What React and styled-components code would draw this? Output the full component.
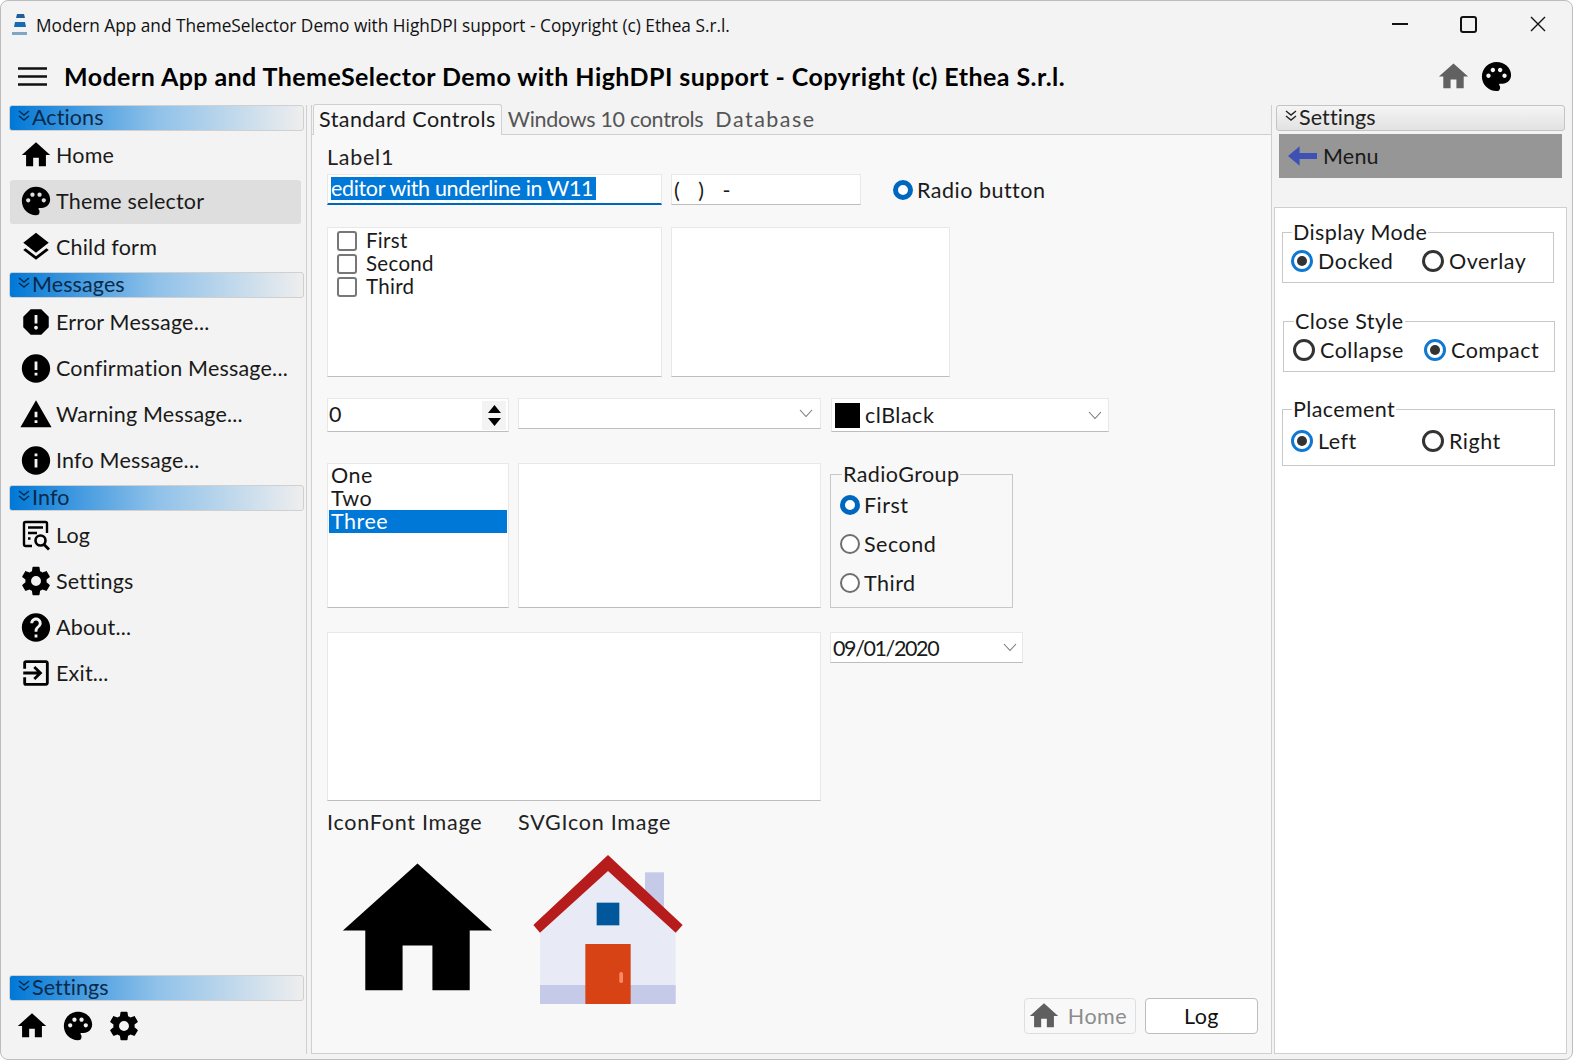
import React from 'react'
import styled, { createGlobalStyle } from 'styled-components'
import {
  MdHome,
  MdPalette,
  MdLayers,
  MdReport,
  MdError,
  MdWarning,
  MdInfo,
  MdHelp,
  MdExitToApp
} from 'react-icons/md'

const FONT = '"Lato", "Open Sans", sans-serif'

const GlobalStyle = createGlobalStyle`
  * { box-sizing: border-box; }
  html, body { margin: 0; padding: 0; background: #fff; }
  body { font-family: ${FONT}; color: #1a1a1a; }
`

const Window = styled.div`
  width: 1573px;
  height: 1060px;
  display: flex;
  flex-direction: column;
  background: #f3f3f3;
  border: 1px solid #bdbdbd;
  border-radius: 8px;
  overflow: hidden;
`
const TitleBar = styled.div`
  height: 50px;
  display: flex;
  align-items: center;
  padding: 0 0 2px 10px;
  flex-shrink: 0;
`
const WindowTitle = styled.span`
  font-family: "Open Sans", sans-serif;
  font-size: 17.25px;
  margin-left: 7px;
  color: #111;
  flex: 1;
`
const WinButton = styled.div`
  width: 69px;
  height: 46px;
  align-self: flex-start;
  display: flex;
  align-items: center;
  justify-content: center;
`
const ToolBar = styled.div`
  height: 54px;
  display: flex;
  align-items: center;
  padding: 0 58px 4px 17px;
  flex-shrink: 0;
`
const AppTitle = styled.h1`
  margin: -1px 0 0 17px;
  font-size: 25px;
  font-weight: 700;
  letter-spacing: 0.44px;
  color: #000;
  flex: 1;
  white-space: nowrap;
`
const ToolIcon = styled.span`
  display: flex;
  margin-left: ${p => p.$gap || 0}px;
  color: ${p => p.$color || '#000'};
`
const Main = styled.div`
  flex: 1;
  display: flex;
  min-height: 0;
  padding-bottom: 5px;
`
const LeftPanel = styled.div`
  width: 306px;
  flex-shrink: 0;
  display: flex;
  flex-direction: column;
  padding-left: 8px;
  padding-right: 1px;
  border-right: 1px solid #cfcfcf;
`
const Section = styled.div`
  display: flex;
  height: 26px;
  width: 295px;
  flex-shrink: 0;
  align-items: center;
  padding: 0 0 2px 7px;
  margin-top: ${p => p.$top || 0}px;
  border: 1px solid #d0d0d0;
  border-radius: 3px;
  background: linear-gradient(to right, #0078d7 0%, #8fc1e9 50%, #eeeeee 100%);
  font-size: 21.5px;
  letter-spacing: 0.1px;
  color: #0a2a4a;
`
const RightSection = styled(Section)`
  width: 289px;
  margin-left: 2px;
  background: linear-gradient(to bottom, #f5f5f5, #e2e2e2);
  color: #222;
  border-color: #c4c4c4;
`
const Chevrons = styled.svg`
  width: 14px;
  height: 13px;
  margin-right: 1px;
  margin-top: -3px;
  flex-shrink: 0;
`
const ItemList = styled.div`
  display: flex;
  flex-direction: column;
  padding-top: ${p => p.$top || 0}px;
  padding-bottom: ${p => p.$bottom || 0}px;
`
const Item = styled.div`
  height: 46px;
  display: flex;
  align-items: center;
  padding: 0 0 2px 9px;
  margin-left: 1px;
  width: 291px;
  border-radius: 3px;
  font-size: 21.5px;
  letter-spacing: 0.2px;
  background: ${p => (p.$active ? '#dedede' : 'transparent')};
  background-clip: padding-box;
  border-top: ${p => (p.$active ? '1px solid #f3f3f3' : 'none')};
  border-bottom: ${p => (p.$active ? '1px solid #f3f3f3' : 'none')};
`
const ItemIcon = styled.span`
  width: 34px;
  height: 34px;
  display: flex;
  align-items: center;
  justify-content: center;
  margin-right: 3px;
  flex-shrink: 0;
  color: #000;
`
const Filler = styled.div`
  flex: 1;
`
const BottomIcons = styled.div`
  display: flex;
  gap: 12px;
  padding: 8px 0 0 6px;
  height: 53px;
  color: #000;
`
const Center = styled.div`
  width: 961px;
  flex-shrink: 0;
  display: flex;
  flex-direction: column;
  margin-left: 4px;
  border-left: 1px solid #cfcfcf;
  border-right: 1px solid #cfcfcf;
`
const TabStrip = styled.div`
  height: 30px;
  display: flex;
  align-items: flex-end;
  padding-left: 1px;
  border-bottom: 1px solid #cfcfcf;
  flex-shrink: 0;
`
const Tab = styled.div`
  height: ${p => (p.$active ? 31 : 28)}px;
  margin-bottom: ${p => (p.$active ? -1 : 0)}px;
  padding: 0 ${p => (p.$active ? 5 : 6)}px 2px;
  display: flex;
  align-items: center;
  font-size: 21.5px;
  letter-spacing: ${p => p.$spacing}px;
  color: ${p => (p.$active ? '#1a1a1a' : '#555')};
  background: ${p => (p.$active ? '#f8f8f8' : 'transparent')};
  border: ${p => (p.$active ? '1px solid #cfcfcf' : 'none')};
  border-bottom: none;
  border-radius: 3px 3px 0 0;
`
const Page = styled.div`
  flex: 1;
  display: flex;
  flex-direction: column;
  background: #f8f8f8;
  padding: 10px 13px 19px 15px;
  border-bottom: 1px solid #cfcfcf;
  min-height: 0;
`
const Caption = styled.div`
  height: 24px;
  line-height: 24px;
  font-size: 21.5px;
  letter-spacing: 0.75px;
  width: ${p => (p.$w ? p.$w + 'px' : 'auto')};
  color: #222;
`
const Row = styled.div`
  display: flex;
  align-items: flex-start;
  margin-top: ${p => p.$top || 0}px;
  flex-shrink: 0;
`
const Box = styled.div`
  width: ${p => p.$w}px;
  height: ${p => p.$h}px;
  margin-left: ${p => p.$left || 0}px;
  background: #fff;
  border: 1px solid #e8e8e8;
  border-bottom: 1px solid #bdbdbd;
  display: flex;
  align-items: center;
  flex-shrink: 0;
  font-size: 21.5px;
  letter-spacing: 0.5px;
`
const EditBox = styled(Box)`
  border-bottom: 2px solid #0067c0;
  padding: 0 0 1px 3px;
`
const Selected = styled.span`
  background: #0078d7;
  color: #fff;
  height: 23px;
  line-height: 23px;
  padding-right: 3px;
  letter-spacing: -0.35px;
  white-space: nowrap;
`
const MaskText = styled.span`
  white-space: pre;
  padding-left: 2px;
`
const SpinText = styled.span`
  flex: 1;
  padding-left: 1px;
  padding-bottom: 3px;
`
const SpinButtons = styled.div`
  width: 24px;
  height: 29px;
  margin-right: 2px;
  background: #f3f3f3;
  display: flex;
  flex-direction: column;
  align-items: center;
  justify-content: center;
  gap: 5px;
`
const Arrow = styled.svg`
  width: 13px;
  height: 8px;
`
const ComboValue = styled.span`
  flex: 1;
  display: flex;
  align-items: center;
  padding-left: ${p => p.$left || 0}px;
  letter-spacing: ${p => p.$spacing ?? 0.5}px;
`
const ComboChevron = styled.svg`
  width: 14px;
  height: 9px;
  margin-right: ${p => p.$right || 7}px;
  flex-shrink: 0;
`
const Swatch = styled.span`
  width: 25px;
  height: 25px;
  background: #000;
  margin-right: 5px;
`
const CheckList = styled.div`
  display: flex;
  flex-direction: column;
  padding: 1px 0 0 9px;
  width: 100%;
  height: 100%;
`
const CheckRow = styled.div`
  height: 23px;
  display: flex;
  align-items: center;
  gap: 9px;
  font-size: 20.5px;
  letter-spacing: 0.3px;
`
const CheckText = styled.span`
  margin-top: -2px;
`
const CheckMark = styled.span`
  width: 20px;
  height: 20px;
  border: 2px solid #777;
  border-radius: 3px;
  background: #fff;
  flex-shrink: 0;
`
const ListColumn = styled.div`
  display: flex;
  flex-direction: column;
  width: 100%;
  height: 100%;
  padding: 0 1px;
`
const ListRow = styled.div`
  height: 23px;
  line-height: 23px;
  padding-left: 2px;
  background: ${p => (p.$selected ? '#0078d7' : 'transparent')};
  color: ${p => (p.$selected ? '#fff' : '#1a1a1a')};
`
const Radio = styled.span`
  width: ${p => p.$size}px;
  height: ${p => p.$size}px;
  border-radius: 50%;
  flex-shrink: 0;
  background: #fff;
  border: ${p => p.$ring}px solid ${p => p.$color};
  display: flex;
  align-items: center;
  justify-content: center;
`
const RadioDot = styled.span`
  width: 10px;
  height: 10px;
  border-radius: 50%;
  background: #333;
`
const RadioLabel = styled.label`
  display: flex;
  align-items: center;
  gap: ${p => p.$gap || 5}px;
  width: ${p => (p.$w ? p.$w + 'px' : 'auto')};
  height: ${p => (p.$h ? p.$h + 'px' : 'auto')};
  margin-left: ${p => p.$left || 0}px;
  margin-top: ${p => p.$top || 0}px;
  font-size: 21.5px;
  letter-spacing: 0.5px;
  flex-shrink: 0;
`
const GroupBox = styled.fieldset`
  margin: ${p => p.$top || 0}px 0 0 ${p => p.$left || 0}px;
  padding: 0;
  width: ${p => p.$w}px;
  height: ${p => p.$h}px;
  border: 1px solid #c8c8c8;
  flex-shrink: 0;
  min-width: 0;
`
const GroupLegend = styled.legend`
  margin-left: ${p => p.$left || 9}px;
  padding: 0 1px;
  font-size: 21.5px;
  letter-spacing: 0.4px;
  line-height: 24px;
  height: 24px;
`
const GroupColumn = styled.div`
  display: flex;
  flex-direction: column;
  margin-top: -1px;
  padding: 0 0 0 9px;
`
const GroupRow = styled.div`
  display: flex;
  padding: ${p => p.$pad || '4px 0 0 8px'};
`
const PictureRow = styled.div`
  flex: 1;
  display: flex;
  align-items: flex-start;
  margin-top: 7px;
  min-height: 0;
`
const BigHouse = styled(MdHome)`
  width: 179px;
  height: 179px;
  margin-left: 1px;
  flex-shrink: 0;
  color: #000;
`
const SvgHouse = styled.svg`
  width: 150px;
  height: 149px;
  margin: 14px 0 0 26px;
  flex-shrink: 0;
`
const Buttons = styled.div`
  display: flex;
  gap: 9px;
  margin-left: auto;
  align-self: flex-end;
`
const Button = styled.div`
  width: ${p => p.$w}px;
  height: 36px;
  display: flex;
  align-items: center;
  justify-content: center;
  gap: ${p => (p.$disabled ? 7 : 0)}px;
  padding-right: ${p => (p.$disabled ? 6 : 0)}px;
  font-size: 21.5px;
  letter-spacing: 0.5px;
  border-radius: 4px;
  background: ${p => (p.$disabled ? 'transparent' : '#fff')};
  color: ${p => (p.$disabled ? '#8c8c8c' : '#111')};
  border: 1px solid ${p => (p.$disabled ? '#dedede' : '#bdbdbd')};
`
const RightPanel = styled.div`
  flex: 1;
  min-width: 0;
  display: flex;
  flex-direction: column;
  margin-left: 2px;
  padding-right: 5px;
`
const MenuItem = styled.div`
  height: 44px;
  margin: 3px 3px 0 5px;
  width: 283px;
  background: #969696;
  display: flex;
  align-items: center;
  padding: 0 0 1px 9px;
  gap: 6px;
  font-size: 21.5px;
  letter-spacing: 0.2px;
`
const SettingsBody = styled.div`
  flex: 1;
  margin-top: 29px;
  background: #fff;
  border: 1px solid #cfcfcf;
  display: flex;
  flex-direction: column;
`

function SectionChevrons() {
  return (
    <Chevrons viewBox="0 0 14 13" fill="none" stroke="currentColor" strokeWidth="1.4">
      <path d="M2 2l5 4 5-4M2 7l5 4 5-4" />
    </Chevrons>
  )
}

function ChevronDown({ right }) {
  return (
    <ComboChevron $right={right} viewBox="0 0 14 9" fill="none" stroke="#777" strokeWidth="1.1">
      <path d="M1 1l6 6.5 6-6.5" />
    </ComboChevron>
  )
}

function GearIcon({ size = 34 }) {
  return (
    <svg width={size} height={size} viewBox="0 0 24 24" fill="currentColor">
      <path d="M12,15.5A3.5,3.5 0 0,1 8.5,12A3.5,3.5 0 0,1 12,8.5A3.5,3.5 0 0,1 15.5,12A3.5,3.5 0 0,1 12,15.5M19.43,12.97C19.47,12.65 19.5,12.33 19.5,12C19.5,11.67 19.47,11.34 19.43,11L21.54,9.37C21.73,9.22 21.78,8.95 21.66,8.73L19.66,5.27C19.54,5.05 19.27,4.96 19.05,5.05L16.56,6.05C16.04,5.66 15.5,5.32 14.87,5.07L14.5,2.42C14.46,2.18 14.25,2 14,2H10C9.75,2 9.54,2.18 9.5,2.42L9.13,5.07C8.5,5.32 7.96,5.66 7.44,6.05L4.95,5.05C4.73,4.96 4.46,5.05 4.34,5.27L2.34,8.73C2.21,8.95 2.27,9.22 2.46,9.37L4.57,11C4.53,11.34 4.5,11.67 4.5,12C4.5,12.33 4.53,12.65 4.57,12.97L2.46,14.63C2.27,14.78 2.21,15.05 2.34,15.27L4.34,18.73C4.46,18.95 4.73,19.03 4.95,18.95L7.44,17.94C7.96,18.34 8.5,18.68 9.13,18.93L9.5,21.58C9.54,21.82 9.75,22 10,22H14C14.25,22 14.46,21.82 14.5,21.58L14.87,18.93C15.5,18.67 16.04,18.34 16.56,17.94L19.05,18.95C19.27,19.03 19.54,18.95 19.66,18.73L21.66,15.27C21.78,15.05 21.73,14.78 21.54,14.63L19.43,12.97Z" />
    </svg>
  )
}

function LogIcon() {
  return (
    <svg width="34" height="34" viewBox="0 0 34 34" fill="none" stroke="#000">
      <path d="M13 28H6.5a1.5 1.5 0 0 1-1.5-1.5V5.5A1.5 1.5 0 0 1 6.5 4h20A1.5 1.5 0 0 1 28 5.5V15" strokeWidth="2.4" />
      <path d="M9 9.5h15M9 15h9M9 20.5h2.5" strokeWidth="2.4" />
      <circle cx="21.5" cy="22.5" r="5" strokeWidth="2.6" />
      <path d="M25 26.5l5 5" strokeWidth="2.8" />
    </svg>
  )
}

function Logo() {
  return (
    <svg width="18" height="24" viewBox="0 0 18 24">
      <path d="M6 1h7l1 4H5z" fill="#1f5f9c" />
      <path d="M4 9h10l1 5H3z" fill="#1a6cb0" />
      <path d="M1 19h15v3H1z" fill="#7fa6c6" />
    </svg>
  )
}

function HouseColor() {
  return (
    <SvgHouse viewBox="640 165 448 447">
      <rect x="975" y="217" width="57" height="110" fill="#c5cae9" />
      <polygon points="660,400 864,210 1067,400 1067,612 660,612" fill="#e8eaf6" />
      <rect x="660" y="555" width="407" height="57" fill="#c5cae9" />
      <polygon points="640,375 864,165 1088,375 1067,398 864,213 660,398" fill="#b71c1c" />
      <rect x="830" y="308" width="68" height="68" fill="#01579b" />
      <rect x="796" y="432" width="136" height="180" fill="#d84315" />
      <rect x="898" y="516" width="11" height="33" rx="5" fill="#ff8a65" />
    </SvgHouse>
  )
}

const actions = [
  { label: 'Home', icon: <MdHome size={34} /> },
  { label: 'Theme selector', icon: <MdPalette size={34} />, active: true },
  { label: 'Child form', icon: <MdLayers size={34} /> }
]
const messages = [
  { label: 'Error Message...', icon: <MdReport size={34} /> },
  { label: 'Confirmation Message...', icon: <MdError size={37} /> },
  { label: 'Warning Message...', icon: <MdWarning size={37} /> },
  { label: 'Info Message...', icon: <MdInfo size={37} /> }
]
const info = [
  { label: 'Log', icon: <LogIcon /> },
  { label: 'Settings', icon: <GearIcon /> },
  { label: 'About...', icon: <MdHelp size={37} /> },
  { label: 'Exit...', icon: <MdExitToApp size={34} /> }
]

function NavItems({ items, top, bottom }) {
  return (
    <ItemList $top={top} $bottom={bottom}>
      {items.map(it => (
        <Item key={it.label} $active={it.active}>
          <ItemIcon>{it.icon}</ItemIcon>
          {it.label}
        </Item>
      ))}
    </ItemList>
  )
}

function Choice({ checked, label, w, left }) {
  return (
    <RadioLabel $w={w} $left={left}>
      <Radio $size={22} $ring={3} $color={checked ? '#0f78d2' : '#333'}>
        {checked && <RadioDot />}
      </Radio>
      {label}
    </RadioLabel>
  )
}

function App() {
  return (
    <>
      <GlobalStyle />
      <Window>
        <TitleBar>
          <Logo />
          <WindowTitle>Modern App and ThemeSelector Demo with HighDPI support - Copyright (c) Ethea S.r.l.</WindowTitle>
          <WinButton>
            <svg width="16" height="16" viewBox="0 0 16 16"><path d="M0 8h16" stroke="#111" strokeWidth="2" /></svg>
          </WinButton>
          <WinButton>
            <svg width="17" height="17" viewBox="0 0 17 17" fill="none"><rect x="1" y="1" width="15" height="15" rx="2" stroke="#111" strokeWidth="2" /></svg>
          </WinButton>
          <WinButton>
            <svg width="16" height="16" viewBox="0 0 16 16" fill="none"><path d="M1 1l14 14M15 1L1 15" stroke="#111" strokeWidth="1.4" /></svg>
          </WinButton>
        </TitleBar>
        <ToolBar>
          <svg width="29" height="19" viewBox="0 0 29 19"><path d="M0 1.5h29M0 9.5h29M0 17.5h29" stroke="#111" strokeWidth="2.6" /></svg>
          <AppTitle>Modern App and ThemeSelector Demo with HighDPI support - Copyright (c) Ethea S.r.l.</AppTitle>
          <ToolIcon $color="#616161"><MdHome size={35} /></ToolIcon>
          <ToolIcon $gap={8}><MdPalette size={35} /></ToolIcon>
        </ToolBar>
        <Main>
          <LeftPanel>
            <Section><SectionChevrons />Actions</Section>
            <NavItems items={actions} top={2} />
            <Section $top={1}><SectionChevrons />Messages</Section>
            <NavItems items={messages} top={2} bottom={1} />
            <Section><SectionChevrons />Info</Section>
            <NavItems items={info} top={2} />
            <Filler />
            <Section><SectionChevrons />Settings</Section>
            <BottomIcons>
              <MdHome size={34} />
              <MdPalette size={34} />
              <GearIcon />
            </BottomIcons>
          </LeftPanel>
          <Center>
            <TabStrip>
              <Tab $active $spacing={0.45}>Standard Controls</Tab>
              <Tab $spacing={-0.3}>Windows 10 controls</Tab>
              <Tab $spacing={1.5}>Database</Tab>
            </TabStrip>
            <Page>
              <Caption>Label1</Caption>
              <Row $top={5}>
                <EditBox $w={335} $h={31}><Selected>editor with underline in W11</Selected></EditBox>
                <Box $w={190} $h={31} $left={9}><MaskText>(   )   -</MaskText></Box>
                <RadioLabel $left={32} $h={31} $gap={4}>
                  <Radio $size={20} $ring={5} $color="#0067c0" />
                  Radio button
                </RadioLabel>
              </Row>
              <Row $top={22}>
                <Box $w={335} $h={150}>
                  <CheckList>
                    <CheckRow><CheckMark /><CheckText>First</CheckText></CheckRow>
                    <CheckRow><CheckMark /><CheckText>Second</CheckText></CheckRow>
                    <CheckRow><CheckMark /><CheckText>Third</CheckText></CheckRow>
                  </CheckList>
                </Box>
                <Box $w={279} $h={150} $left={9} />
              </Row>
              <Row $top={21}>
                <Box $w={182} $h={34}>
                  <SpinText>0</SpinText>
                  <SpinButtons>
                    <Arrow viewBox="0 0 13 8"><path d="M6.5 0L13 8H0z" /></Arrow>
                    <Arrow viewBox="0 0 13 8"><path d="M0 0h13L6.5 8z" /></Arrow>
                  </SpinButtons>
                </Box>
                <Box $w={303} $h={31} $left={9}>
                  <ComboValue />
                  <ChevronDown />
                </Box>
                <Box $w={278} $h={34} $left={10}>
                  <ComboValue $left={3}><Swatch />clBlack</ComboValue>
                  <ChevronDown right={6} />
                </Box>
              </Row>
              <Row $top={31}>
                <Box $w={182} $h={145}>
                  <ListColumn>
                    <ListRow>One</ListRow>
                    <ListRow>Two</ListRow>
                    <ListRow $selected>Three</ListRow>
                  </ListColumn>
                </Box>
                <Box $w={303} $h={145} $left={9} />
                <GroupBox $w={183} $h={146} $left={9} $top={-1}>
                  <GroupLegend $left={11}>RadioGroup</GroupLegend>
                  <GroupColumn>
                    <RadioLabel $h={39} $gap={4}><Radio $size={20} $ring={5} $color="#0067c0" />First</RadioLabel>
                    <RadioLabel $h={39} $gap={4}><Radio $size={20} $ring={2} $color="#6e6e6e" />Second</RadioLabel>
                    <RadioLabel $h={39} $gap={4}><Radio $size={20} $ring={2} $color="#6e6e6e" />Third</RadioLabel>
                  </GroupColumn>
                </GroupBox>
              </Row>
              <Row $top={24}>
                <Box $w={494} $h={169} />
                <Box $w={193} $h={31} $left={9}>
                  <ComboValue $left={2} $spacing={-1.4}>09/01/2020</ComboValue>
                  <ChevronDown right={5} />
                </Box>
              </Row>
              <Row $top={9}>
                <Caption $w={191}>IconFont Image</Caption>
                <Caption>SVGIcon Image</Caption>
              </Row>
              <PictureRow>
                <BigHouse />
                <HouseColor />
                <Buttons>
                  <Button $w={112} $disabled><MdHome size={34} color="#5f5f5f" />Home</Button>
                  <Button $w={113}>Log</Button>
                </Buttons>
              </PictureRow>
            </Page>
          </Center>
          <RightPanel>
            <RightSection><SectionChevrons />Settings</RightSection>
            <MenuItem>
              <svg width="29" height="20" viewBox="0 0 30 20"><path d="M0 10L12 0v7h18v6H12v7z" fill="#3f51b5" /></svg>
              Menu
            </MenuItem>
            <SettingsBody>
              <GroupBox $w={272} $h={63} $left={7} $top={12}>
                <GroupLegend>Display Mode</GroupLegend>
                <GroupRow>
                  <Choice checked label="Docked" w={131} />
                  <Choice label="Overlay" />
                </GroupRow>
              </GroupBox>
              <GroupBox $w={272} $h={63} $left={8} $top={26}>
                <GroupLegend $left={10}>Close Style</GroupLegend>
                <GroupRow $pad="4px 0 0 9px">
                  <Choice label="Collapse" w={131} />
                  <Choice checked label="Compact" />
                </GroupRow>
              </GroupBox>
              <GroupBox $w={273} $h={69} $left={7} $top={25}>
                <GroupLegend>Placement</GroupLegend>
                <GroupRow $pad="7px 0 0 8px">
                  <Choice checked label="Left" w={131} />
                  <Choice label="Right" />
                </GroupRow>
              </GroupBox>
            </SettingsBody>
          </RightPanel>
        </Main>
      </Window>
    </>
  )
}

export default App
